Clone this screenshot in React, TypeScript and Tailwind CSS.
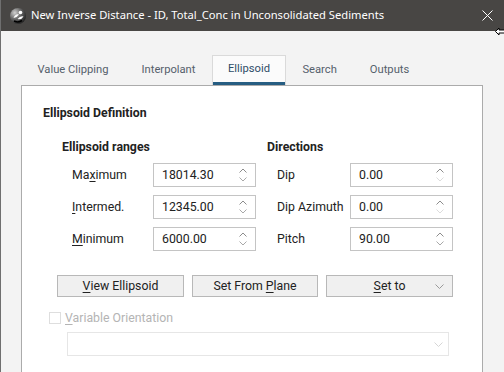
import React from 'react';

const Chevron = ({ up, color }: { up?: boolean; color: string }) => (
  <svg width="8" height="5" viewBox="0 0 8 5" className="block">
    <path d={up ? 'M0.5 4.5 L4 1 L7.5 4.5' : 'M0.5 0.5 L4 4 L7.5 0.5'} fill="none" stroke={color} strokeWidth="1" />
  </svg>
);

function SpinBox({ value, upColor = '#8c8c8c', downColor = '#a8a8a8' }: { value: string; upColor?: string; downColor?: string }) {
  return (
    <div className="flex h-[24px] w-[103px] items-center justify-between border border-[#c4c4c4] bg-white pl-[8px] pr-[8px]">
      <span className="text-[12.3px] text-[#222]">{value}</span>
      <div className="flex flex-col gap-[4px]">
        <Chevron up color={upColor} />
        <Chevron color={downColor} />
      </div>
    </div>
  );
}

const Mn = ({ children }: { children: React.ReactNode }) => <span className="underline underline-offset-2">{children}</span>;

function Row({ label, labelW, value, upColor, downColor }: { label: React.ReactNode; labelW: string; value: string; upColor?: string; downColor?: string }) {
  return (
    <div className="flex items-center">
      <div className={`${labelW} pl-[10px] text-[12.3px] text-[#222]`}>{label}</div>
      <SpinBox value={value} upColor={upColor} downColor={downColor} />
    </div>
  );
}

const tabs = ['Value Clipping', 'Interpolant', 'Ellipsoid', 'Search', 'Outputs'];

export default function App() {
  return (
    <div className="relative h-[372px] w-[504px] overflow-hidden border-l border-[#6f6f6f] bg-[#f3f3f3] font-['Roboto',sans-serif]">
      <div className="flex h-[31px] items-center bg-[#484644] pl-[8px] pr-[11px]">
        <svg width="18" height="18" viewBox="0 0 18 18">
          <defs>
            <radialGradient id="ig" cx="0.3" cy="0.3" r="0.85">
              <stop offset="0" stopColor="#d0d0d0" />
              <stop offset="0.45" stopColor="#6a6a6a" />
              <stop offset="1" stopColor="#141414" />
            </radialGradient>
          </defs>
          <circle cx="9" cy="9" r="8" fill="url(#ig)" />
          <path d="M4.5 11 Q6.5 6.5 10 7.5 Q8.5 10 4.5 11Z" fill="#fff" />
          <path d="M8.5 12 Q11.5 8.5 14.5 9.5 Q12.5 13 8.5 12Z" fill="#fff" />
          <circle cx="11.5" cy="5.5" r="1.8" fill="#fff" />
          <path d="M5 14 Q9 16 13 13.5" fill="none" stroke="#000" strokeWidth="1.5" />
        </svg>
        <span className="ml-[4px] font-['Noto_Sans',sans-serif] text-[11.2px] text-white">
          New Inverse Distance - ID, Total_Conc in Unconsolidated Sediments
        </span>
        <svg width="11" height="11" viewBox="0 0 11 11" className="ml-auto">
          <path d="M0.5 0.5 L10.5 10.5 M10.5 0.5 L0.5 10.5" stroke="#fff" strokeWidth="1" />
        </svg>
      </div>

      <svg width="10" height="9" viewBox="0 0 10 9" className="absolute right-[-1px] top-[27px]">
        <path d="M0.5 4.5 L4 1 L4 3 L9.5 3 L9.5 6 L4 6 L4 8 Z" fill="#fff" stroke="#000" strokeWidth="1" />
      </svg>

      <div className="pt-[24px]">
        <div className="flex pl-[20px]">
          {tabs.map((t) =>
            t === 'Ellipsoid' ? (
              <div key={t} className="flex h-[30px] flex-col border-x border-t border-[#dadada] bg-[#fbfbfb]">
                <div className="flex flex-1 items-center px-[15px] text-[11.2px] text-[#2f4d68]">{t}</div>
                <div className="h-[3px] bg-[#265d82]" />
              </div>
            ) : (
              <div key={t} className="flex h-[30px] items-center px-[16.5px] text-[11.2px] text-[#55606b]">
                {t}
              </div>
            ),
          )}
        </div>

        <div className="ml-[20px] h-[300px] w-[462px] border border-[#ababab] bg-white pl-[21px] pt-[19px]">
          <div className="text-[12.3px] font-bold leading-[16px] text-[#222]">Ellipsoid Definition</div>

          <div className="mt-[18px] flex pl-[19px]">
            <div className="w-[205px]">
              <div className="text-[12.3px] font-bold leading-[16px] text-[#222]">Ellipsoid ranges</div>
              <div className="mt-[8px] flex flex-col gap-[8px]">
                <Row label={<>Ma<Mn>x</Mn>imum</>} labelW="w-[91px]" value="18014.30" />
                <Row label={<><Mn>I</Mn>ntermed.</>} labelW="w-[91px]" value="12345.00" />
                <Row label={<><Mn>M</Mn>inimum</>} labelW="w-[91px]" value="6000.00" />
              </div>
            </div>
            <div>
              <div className="text-[12.3px] font-bold leading-[16px] text-[#222]">Directions</div>
              <div className="mt-[8px] flex flex-col gap-[8px]">
                <Row label="Dip" labelW="w-[83px]" value="0.00" downColor="#dcdcdc" />
                <Row label="Dip Azimuth" labelW="w-[83px]" value="0.00" downColor="#dcdcdc" />
                <Row label="Pitch" labelW="w-[83px]" value="90.00" />
              </div>
            </div>
          </div>

          <div className="mt-[24px] flex gap-[8px] pl-[14px] text-[12.3px] text-[#222]">
            <div className="flex h-[22px] w-[127px] items-center justify-center border border-[#b8b8b8] bg-[#f0f0f0]">
              <span><Mn>V</Mn>iew Ellipsoid</span>
            </div>
            <div className="flex h-[22px] w-[126px] items-center justify-center border border-[#b8b8b8] bg-[#f0f0f0]">
              <span>Set From <Mn>P</Mn>lane</span>
            </div>
            <div className="relative flex h-[22px] w-[127px] items-center justify-center border border-[#b8b8b8] bg-[#f0f0f0]">
              <span><Mn>S</Mn>et to</span>
              <svg width="9" height="5" viewBox="0 0 9 5" className="absolute right-[8px] top-[8px]">
                <path d="M0.5 0.5 L4.5 4.5 L8.5 0.5" fill="none" stroke="#9a9a9a" strokeWidth="1" />
              </svg>
            </div>
          </div>

          <div className="mt-[13px] flex h-[16px] items-center pl-[6px]">
            <div className="h-[12px] w-[12px] border border-[#dedede] bg-white" />
            <span className="ml-[4px] text-[12.3px] text-[#b4b4b4]"><Mn>V</Mn>ariable Orientation</span>
          </div>

          <div className="relative ml-[24px] mt-[6px] h-[24px] w-[382px] border border-[#e6e6e6] bg-white">
            <svg width="9" height="5" viewBox="0 0 9 5" className="absolute right-[5px] top-[9px]">
              <path d="M0.5 0.5 L4.5 4.5 L8.5 0.5" fill="none" stroke="#d6d6d6" strokeWidth="1" />
            </svg>
          </div>
        </div>
      </div>
    </div>
  );
}
